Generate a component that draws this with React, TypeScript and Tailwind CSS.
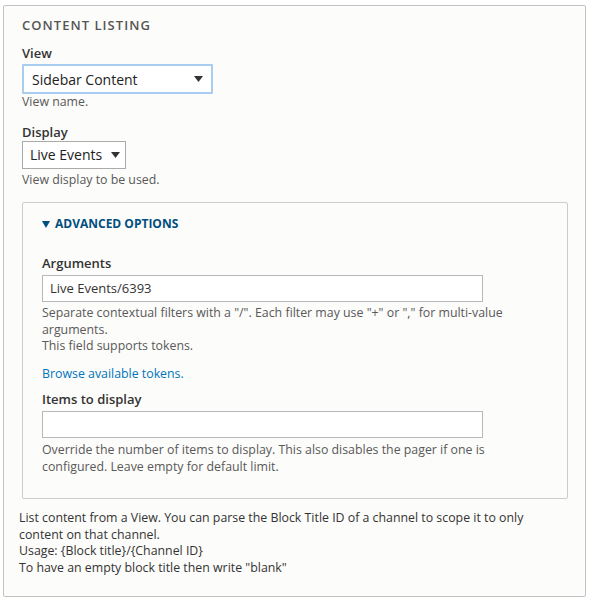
import React from 'react'

const font = { fontFamily: '"Open Sans", "Noto Sans", sans-serif' }

function Caret() {
  return (
    <svg width="9" height="6" viewBox="0 0 9 6" className="shrink-0">
      <path d="M0 0h9L4.5 6z" fill="#333" />
    </svg>
  )
}

export default function App() {
  return (
    <div className="min-h-[605px] bg-white pt-[5px] pl-[3px] pr-[4px] pb-[7px]" style={font}>
      <div className="rounded-[2px] border border-[#c2c2c0] bg-[#fcfcfa] px-[18px] pt-[9px] pb-[20px] text-[#333]">
        <h2 className="text-[13px] font-semibold uppercase tracking-[0.08em] text-[#555] leading-[20px]">
          Content listing
        </h2>

        <div className="mt-[10px]">
          <label className="block text-[13px] font-semibold leading-[17px]">View</label>
          <div className="mt-[2px] flex h-[30px] w-[191px] items-center justify-between rounded-[1px] border-2 border-[#a9cdf0] bg-white pl-[8px] pr-[8px] text-[14px] text-[#222]">
            <span>Sidebar Content</span>
            <Caret />
          </div>
          <p className="text-[12.35px] leading-[16.5px] text-[#595959]">View name.</p>
        </div>

        <div className="mt-[13px]">
          <label className="block text-[13px] font-semibold leading-[17px]">Display</label>
          <div className="flex h-[28px] w-[104px] items-center gap-[9px] border border-[#aaa] bg-white pl-[7px] text-[14px] text-[#222]">
            <span>Live Events</span>
            <Caret />
          </div>
          <p className="mt-[3px] text-[12.35px] leading-[16.5px] text-[#595959]">View display to be used.</p>
        </div>

        <div className="mt-[14px] mr-[-1px] rounded-[2px] border border-[#ccc] bg-[#fcfcfa] pl-[19px] pr-[21px] pt-[13px] pb-[23px]">
          <div className="flex items-center gap-[5px] text-[12px] font-bold uppercase leading-[16px] text-[#004f80]">
            <svg width="8" height="7" viewBox="0 0 8 7">
              <path d="M0 0h8L4 7z" fill="#004f80" />
            </svg>
            Advanced options
          </div>

          <label className="mt-[23px] block text-[13px] font-semibold leading-[17px]">Arguments</label>
          <div className="mt-[3px] flex h-[27px] w-[441px] items-center border border-[#b8b8b8] bg-white pl-[7px] text-[13px] text-[#333]">
            Live Events/6393
          </div>
          <div className="mt-[3px] text-[12.35px] leading-[16.5px] text-[#595959]">
            <p>Separate contextual filters with a "/". Each filter may use "+" or "," for multi-value arguments.</p>
            <p>This field supports tokens.</p>
          </div>
          <a className="mt-[11px] block text-[12.35px] leading-[16.5px] text-[#0074bd]">Browse available tokens.</a>

          <label className="mt-[9px] block text-[13px] font-semibold leading-[17px]">Items to display</label>
          <div className="mt-[3px] h-[27px] w-[441px] border border-[#b8b8b8] bg-white" />
          <p className="mt-[4px] text-[12.35px] leading-[16.5px] text-[#595959]">
            Override the number of items to display. This also disables the pager if one is configured. Leave empty for default limit.
          </p>
        </div>

        <div className="mt-[11px] ml-[-3px] pr-[20px] text-[12.35px] leading-[16.5px] text-[#333]">
          <p>List content from a View. You can parse the Block Title ID of a channel to scope it to only content on that channel.</p>
          <p>Usage: {'{Block title}/{Channel ID}'}</p>
          <p>To have an empty block title then write "blank"</p>
        </div>
      </div>
    </div>
  )
}
